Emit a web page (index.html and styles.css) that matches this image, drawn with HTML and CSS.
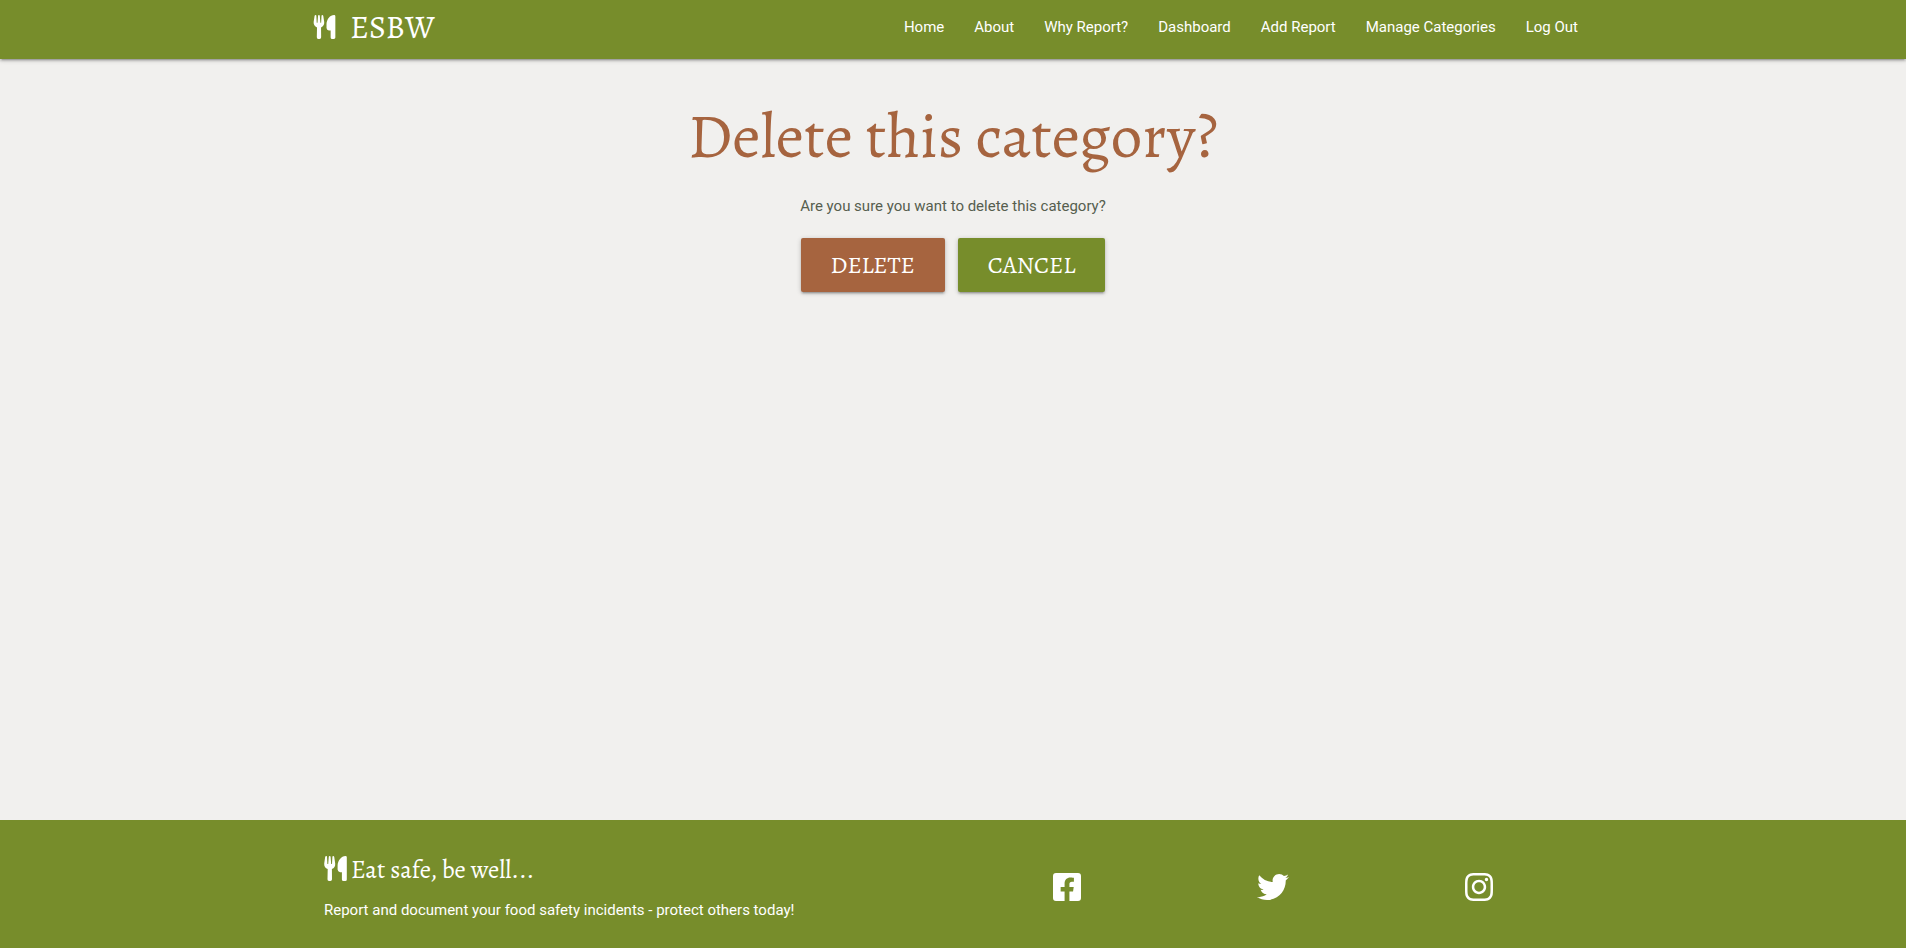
FILE: index.html
```html
<!DOCTYPE html>
<html lang="en">
<head>
<meta charset="utf-8">
<meta name="viewport" content="width=device-width, initial-scale=1">
<title>ESBW - Delete category</title>
<link rel="stylesheet" href="styles.css">
</head>
<body>
<svg class="sprite" aria-hidden="true">
  <symbol id="utensils" viewBox="0 0 23 25"><path d="M1.2.8Q1.5 0 2.3 0T3 .8L3.4 8h.8L4.8.8Q4.9 0 5.7 0t.9.8L7.2 8H8L8.4.8Q8.5 0 9.2 0t1 .8l1 6.6c.3 2.8-1 4.7-3.3 5.6L8 23.2Q8 25 6.400 25H5Q3.400 25 3.500 23.200L3.700 13C1.300 12.100 0 10.200.200 7.400z"/><path d="M21.500 0q1.300 0 1.300 1.300v22.200q0 1.500-1.500 1.500h-1.800q-1.600 0-1.600-1.600V16.200h-1.800q-2.300-.3-2.500-2.700V9.500C13.800 4.500 17.300 0 21.500 0z"/></symbol>
</svg>
<header class="navbar">
  <nav class="container navbar-inner">
    <a class="brand" href="#"><svg class="brand-icon" aria-hidden="true"><use href="#utensils"/></svg>ESBW</a>
    <ul class="nav-links">
      <li><a href="#">Home</a></li>
      <li><a href="#">About</a></li>
      <li><a href="#">Why Report?</a></li>
      <li><a href="#">Dashboard</a></li>
      <li><a href="#">Add Report</a></li>
      <li><a href="#">Manage Categories</a></li>
      <li><a href="#">Log Out</a></li>
    </ul>
  </nav>
</header>
<main class="container content">
  <h1 class="title">Delete this category?</h1>
  <p class="question">Are you sure you want to delete this category?</p>
  <div class="actions">
    <button class="btn btn-delete" type="button">DELETE</button>
    <button class="btn btn-cancel" type="button">CANCEL</button>
  </div>
</main>
<footer class="footer">
  <div class="container footer-inner">
    <div class="footer-about">
      <h2 class="footer-title"><svg class="footer-icon" aria-hidden="true"><use href="#utensils"/></svg>Eat safe, be well...</h2>
      <p class="footer-text">Report and document your food safety incidents - protect others today!</p>
    </div>
    <div class="social">
      <a href="#" aria-label="Facebook"><svg class="social-icon" viewBox="0 0 448 512"><path d="M400 32H48A48 48 0 0 0 0 80v352a48 48 0 0 0 48 48h137.25V327.69h-63V256h63v-54.64c0-62.15 37-96.48 93.67-96.48 27.14 0 55.52 4.84 55.52 4.84v61h-31.27c-30.81 0-40.42 19.12-40.42 38.73V256h68.78l-11 71.69h-57.78V480H400a48 48 0 0 0 48-48V80a48 48 0 0 0-48-48z"/></svg></a>
      <a href="#" aria-label="Twitter"><svg class="social-icon" viewBox="0 0 512 512"><path d="M459.37 151.716c.325 4.548.325 9.097.325 13.645 0 138.72-105.583 298.558-298.558 298.558-59.452 0-114.68-17.219-161.137-47.106 8.447.974 16.568 1.299 25.34 1.299 49.055 0 94.213-16.568 130.274-44.832-46.132-.975-84.792-31.188-98.112-72.772 6.498.974 12.995 1.624 19.818 1.624 9.421 0 18.843-1.3 27.614-3.573-48.081-9.747-84.143-51.98-84.143-102.985v-1.299c13.969 7.797 30.214 12.67 47.431 13.319-28.264-18.843-46.781-51.005-46.781-87.391 0-19.492 5.197-37.36 14.294-52.954 51.655 63.675 129.3 105.258 216.365 109.807-1.624-7.797-2.599-15.918-2.599-24.04 0-57.828 46.782-104.934 104.934-104.934 30.213 0 57.502 12.67 76.67 33.137 23.715-4.548 46.456-13.32 66.599-25.34-7.798 24.366-24.366 44.833-46.132 57.827 21.117-2.273 41.584-8.122 60.426-16.243-14.292 20.791-32.161 39.308-52.628 54.253z"/></svg></a>
      <a href="#" aria-label="Instagram"><svg class="social-icon" viewBox="0 0 448 512"><path d="M224.1 141c-63.6 0-114.9 51.3-114.9 114.9s51.3 114.9 114.9 114.9S339 319.5 339 255.9 287.7 141 224.1 141zm0 189.6c-41.1 0-74.7-33.5-74.7-74.7s33.5-74.7 74.7-74.7 74.7 33.5 74.7 74.7-33.6 74.7-74.7 74.7zm146.4-194.3c0 14.9-12 26.8-26.8 26.8-14.9 0-26.8-12-26.8-26.8s12-26.8 26.8-26.8 26.8 12 26.8 26.8zm76.1 27.2c-1.7-35.9-9.9-67.7-36.2-93.9-26.2-26.2-58-34.4-93.9-36.2-37-2.1-147.9-2.1-184.9 0-35.8 1.7-67.6 9.9-93.9 36.1s-34.4 58-36.2 93.9c-2.1 37-2.1 147.9 0 184.9 1.7 35.9 9.9 67.7 36.2 93.9s58 34.4 93.9 36.2c37 2.1 147.9 2.1 184.9 0 35.9-1.7 67.7-9.9 93.9-36.2 26.2-26.2 34.4-58 36.2-93.9 2.1-37 2.1-147.8 0-184.8zM398.8 388c-7.8 19.6-22.9 34.7-42.6 42.6-29.5 11.7-99.5 9-132.1 9s-102.7 2.6-132.1-9c-19.6-7.8-34.7-22.9-42.6-42.6-11.7-29.5-9-99.5-9-132.1s-2.6-102.7 9-132.1c7.8-19.6 22.9-34.7 42.6-42.6 29.5-11.7 99.5-9 132.1-9s102.7-2.6 132.1 9c19.6 7.8 34.7 22.9 42.6 42.6 11.7 29.5 9 99.5 9 132.1s2.7 102.7-9 132.1z"/></svg></a>
    </div>
  </div>
</footer>
</body>
</html>
```
FILE: styles.css
```css
* { box-sizing: border-box; }

body {
  margin: 0;
  min-height: 100vh;
  display: flex;
  flex-direction: column;
  background: #f1f0ee;
  color: #565e4e;
  font: 15px/24px Roboto, sans-serif;
}

h1, h2, p, ul { margin: 0; padding: 0; }
h1, h2 { font-weight: 400; }
a { color: inherit; text-decoration: none; }
svg { fill: currentColor; }
.sprite { display: none; }

.container {
  width: 70%;
  max-width: 1280px;
  margin: 0 auto;
}

.navbar {
  background: #778d2b;
  color: #fff;
  box-shadow: 0 2px 2px rgba(0, 0, 0, .14), 0 3px 1px -2px rgba(0, 0, 0, .12), 0 1px 5px rgba(0, 0, 0, .2);
}

.navbar-inner {
  display: flex;
  justify-content: space-between;
  align-items: center;
  padding-bottom: 5px;
}

.brand {
  display: flex;
  align-items: center;
  gap: 14px;
  font: 32px/54px Alegreya, "Liberation Serif", serif;
}

.brand-icon { width: 23px; height: 24px; }

.nav-links {
  display: flex;
  list-style: none;
}

.nav-links a {
  display: block;
  padding: 0 15px;
  line-height: 54px;
}

.content {
  flex: 1;
  display: flex;
  flex-direction: column;
  align-items: center;
  padding-top: 42px;
}

.title {
  color: #a6643f;
  font: 63px/70px Alegreya, "Liberation Serif", serif;
}

.question { margin-top: 23px; }

.actions {
  display: flex;
  gap: 13px;
  margin-top: 20px;
}

.btn {
  padding: 0 30px;
  border: 0;
  border-radius: 2px;
  color: #fff;
  font: 24px/54px Alegreya, "Liberation Serif", serif;
  box-shadow: 0 2px 2px rgba(0, 0, 0, .14), 0 3px 1px -2px rgba(0, 0, 0, .12), 0 1px 5px rgba(0, 0, 0, .2);
  cursor: pointer;
}

.btn-delete { background: #a6643f; }
.btn-cancel { background: #778d2b; }

.footer {
  background: #778d2b;
  color: #fff;
}

.footer-inner {
  display: grid;
  grid-template-columns: 1fr 1fr;
  gap: 22px;
  align-items: center;
  padding: 34px 11px 26px;
}

.footer-title {
  display: flex;
  align-items: flex-start;
  gap: 4px;
  font: 25px/32px Alegreya, "Liberation Serif", serif;
}

.footer-icon {
  width: 23px;
  height: 25px;
  margin-top: 2px;
}

.footer-text { margin-top: 12px; }

.social {
  display: grid;
  grid-template-columns: repeat(3, 1fr);
  justify-items: center;
  padding-bottom: 2px;
}

.social-icon {
  display: block;
  height: 32px;
}
```
